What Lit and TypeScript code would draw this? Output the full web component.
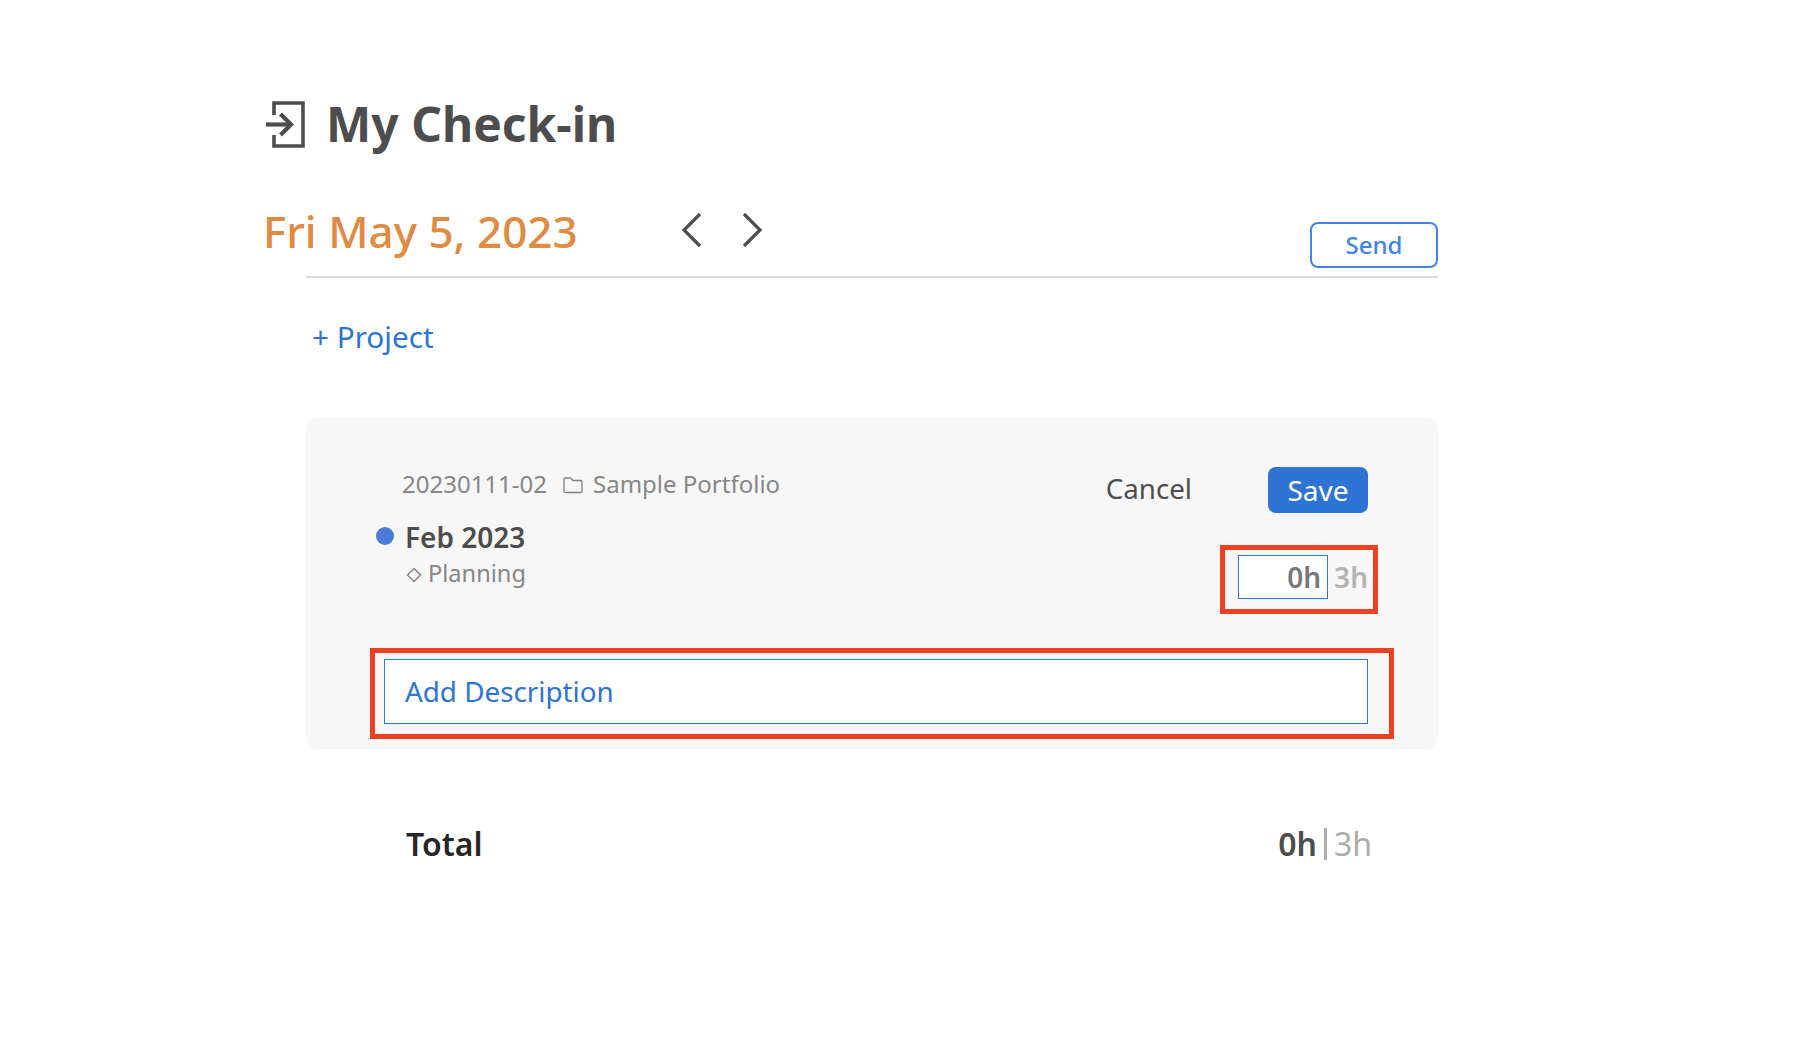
import { LitElement, html, css } from "lit";
import { customElement } from "lit/decorators.js";

@customElement("app-root")
export class AppRoot extends LitElement {
  static styles = css`
    :host { display: block; width: 1820px; height: 1056px; background: #fff; font-family: "Noto Sans", sans-serif; color: #4d4d4d; overflow: hidden; }
    .page { width: 1175px; padding: 91px 0 0 263px; display: flex; flex-direction: column; }
    .title { display: flex; align-items: center; gap: 21px; height: 66px; }
    .title svg { width: 40px; height: 48px; flex: none; margin-left: 2px; }
    h1 { margin: 0; font-size: 48px; line-height: 66px; font-weight: 700; color: #4d4d4d; }
    .dateRow { display: flex; align-items: flex-start; margin-top: 39px; height: 82px; }
    .date { font-size: 44px; line-height: 60px; margin-top: 5px; font-weight: 500; color: #e08a42; width: 418px; }
    .nav { display: flex; gap: 34px; margin-top: 16px; }
    .nav svg { width: 24px; height: 36px; }
    .send { margin-left: auto; margin-top: 26px; width: 128px; height: 46px; box-sizing: border-box; border: 2px solid #4285e8; border-radius: 8px; background: #fff; color: #4285e8; font: 500 24px/40px "Noto Sans", sans-serif; padding: 0; text-align: center; }
    .body { margin-left: 43px; display: flex; flex-direction: column; }
    .rule { height: 2px; background: #dcdcdc; margin-top: -2px; }
    .project { margin: 39px 0 0 6px; font-size: 29.7px; line-height: 40px; color: #2d74d4; }
    .card { position: relative; margin-top: 61px; height: 331px; box-sizing: border-box; background: #f7f7f7; border-radius: 12px; padding: 49px 70px 24px 70px; display: flex; flex-direction: column; }
    .top { display: flex; justify-content: space-between; align-items: flex-start; }
    .left { display: flex; flex-direction: column; }
    .meta { display: flex; align-items: center; padding-left: 26px; font-size: 24px; line-height: 34px; color: #868686; height: 34px; }
    .meta svg { width: 20px; height: 18px; margin: 2px 10px 0 16px; }
    .feb { display: flex; align-items: center; gap: 11px; margin-top: 17px; font-size: 28px; line-height: 38px; font-weight: 600; color: #4d4d4d; }
    .dot { width: 18px; height: 18px; border-radius: 50%; background: #4a7bd6; margin-bottom: 2px; }
    .plan { display: flex; align-items: center; gap: 6px; padding-left: 30px; font-size: 23.6px; line-height: 34px; color: #868686; }
    .plan svg { width: 16px; height: 16px; margin-top: 3px; }
    .right { display: flex; flex-direction: column; align-items: flex-end; }
    .actions { display: flex; align-items: center; gap: 76px; }
    .cancel { font-size: 27.7px; line-height: 40px; color: #4d4d4d; margin-bottom: 4px; }
    .save { width: 100px; height: 46px; border-radius: 8px; background: #2d74d4; color: #fff; font-size: 28px; line-height: 46px; text-align: center; }
    .hours { display: flex; align-items: center; gap: 6px; margin-top: 42px; font-size: 28px; }
    .hin { width: 90px; height: 44px; box-sizing: border-box; border: 1px solid #2d74d4; background: #fff; text-align: right; padding-right: 6px; line-height: 42px; font-weight: 600; color: #787878; }
    .hmax { font-weight: 600; color: #b4b4b4; line-height: 44px; }
    .desc { position: absolute; left: 78px; right: 70px; top: 241px; height: 65px; box-sizing: border-box; border: 1px solid #2d74d4; background: #fff; padding-left: 20px; font-size: 27.8px; line-height: 63px; color: #2d74d4; }
    .mark { position: absolute; box-sizing: border-box; border: 5px solid #ee4023; pointer-events: none; }
    .m1 { left: 914px; top: 127px; width: 158px; height: 69px; }
    .m2 { left: 64px; top: 230px; width: 1024px; height: 91px; }
    .total { display: flex; justify-content: space-between; align-items: center; margin-top: 73px; padding: 0 66px 0 100px; font-size: 32px; line-height: 44px; }
    .tl { font-weight: 600; color: #262626; }
    .tv { display: flex; align-items: center; color: #adadad; }
    .tv b { font-weight: 600; color: #4d4d4d; }
    .tv i { font-style: normal; margin: 0 7px 0 7px; width: 3px; height: 32px; background: #adadad; }
  `;

  render() {
    return html`
      <div class="page">
        <div class="title">
          <svg viewBox="0 0 40 48" fill="none" stroke="#4d4d4d" stroke-width="3.6">
            <path d="M9 15V3h29v43H9V35" />
            <path d="M1 24.5h25" stroke-width="4.2" />
            <path d="M15.5 14l10.5 10.5L15.5 35" stroke-width="4.2" />
          </svg>
          <h1>My Check-in</h1>
        </div>
        <div class="dateRow">
          <div class="date">Fri May 5, 2023</div>
          <div class="nav">
            <svg viewBox="0 0 24 36" fill="none" stroke="#4d4d4d" stroke-width="3.2"><path d="M19 2 3 18l16 16" /></svg>
            <svg viewBox="0 0 24 36" fill="none" stroke="#4d4d4d" stroke-width="3.2"><path d="M5 2l16 16L5 34" /></svg>
          </div>
          <button class="send">Send</button>
        </div>
        <div class="body">
          <div class="rule"></div>
          <div class="project">+ Project</div>
          <div class="card">
            <div class="top">
              <div class="left">
                <div class="meta">
                  <span>20230111-02</span>
                  <svg viewBox="0 0 20 18" fill="none" stroke="#808080" stroke-width="1.3"><path d="M1 3.5a1.5 1.5 0 0 1 1.5-1.5h5L10 4.5h7.5A1.5 1.5 0 0 1 19 6v9a1.5 1.5 0 0 1-1.5 1.5h-15A1.5 1.5 0 0 1 1 15z" /></svg>
                  <span>Sample Portfolio</span>
                </div>
                <div class="feb"><span class="dot"></span><span>Feb 2023</span></div>
                <div class="plan">
                  <svg viewBox="0 0 16 16" fill="none" stroke="#808080" stroke-width="1.3"><path d="M8 1.5 14.5 8 8 14.5 1.5 8z" /></svg>
                  <span>Planning</span>
                </div>
              </div>
              <div class="right">
                <div class="actions"><span class="cancel">Cancel</span><span class="save">Save</span></div>
                <div class="hours"><div class="hin">0h</div><div class="hmax">3h</div></div>
              </div>
            </div>
            <div class="desc">Add Description</div>
            <div class="mark m1"></div>
            <div class="mark m2"></div>
          </div>
          <div class="total">
            <span class="tl">Total</span>
            <span class="tv"><b>0h</b><i></i><span>3h</span></span>
          </div>
        </div>
      </div>
    `;
  }
}
